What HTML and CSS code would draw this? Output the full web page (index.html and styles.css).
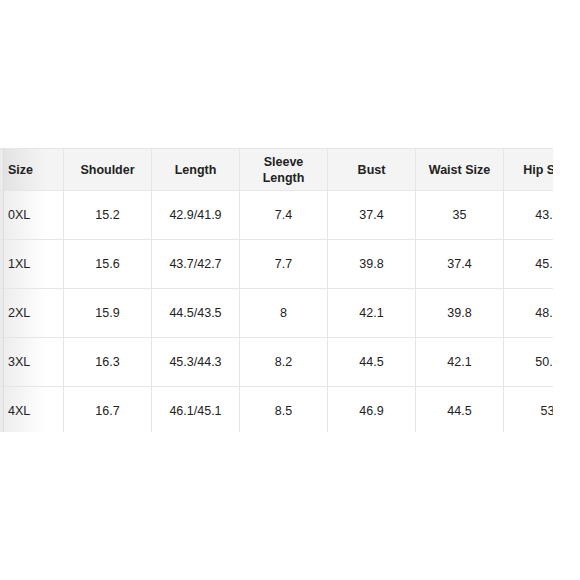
FILE: index.html
```html
<!DOCTYPE html>
<html>
<head>
<meta charset="utf-8">
<link rel="stylesheet" href="styles.css">
</head>
<body>
<div class="wrap">
<table class="sizes">
<thead>
<tr>
<th class="edge"></th><th class="size">Size</th><th>Shoulder</th><th>Length</th><th>Sleeve<br>Length</th><th>Bust</th><th>Waist Size</th><th>Hip Size</th>
</tr>
</thead>
<tbody>
<tr><td class="edge"></td><td class="size">0XL</td><td>15.2</td><td>42.9/41.9</td><td>7.4</td><td>37.4</td><td>35</td><td>43.3</td></tr>
<tr><td class="edge"></td><td class="size">1XL</td><td>15.6</td><td>43.7/42.7</td><td>7.7</td><td>39.8</td><td>37.4</td><td>45.9</td></tr>
<tr><td class="edge"></td><td class="size">2XL</td><td>15.9</td><td>44.5/43.5</td><td>8</td><td>42.1</td><td>39.8</td><td>48.3</td></tr>
<tr><td class="edge"></td><td class="size">3XL</td><td>16.3</td><td>45.3/44.3</td><td>8.2</td><td>44.5</td><td>42.1</td><td>50.6</td></tr>
<tr><td class="edge"></td><td class="size">4XL</td><td>16.7</td><td>46.1/45.1</td><td>8.5</td><td>46.9</td><td>44.5</td><td>53</td></tr>
</tbody>
</table>
</div>
</body>
</html>
```
FILE: styles.css
```css
html, body {
  margin: 0;
  padding: 0;
  background: #fff;
}
body {
  padding-top: 148px;
  font-family: "Liberation Sans", Arial, sans-serif;
  color: #222;
}
.wrap {
  width: 553px;
  height: 284px;
  overflow: hidden;
}
.sizes {
  border-collapse: separate;
  border-spacing: 0;
  table-layout: fixed;
  width: 592px;
  font-size: 12.5px;
}
.sizes th, .sizes td {
  box-sizing: border-box;
  width: 88px;
  padding: 0 4px;
  text-align: center;
  border-right: 1px solid #e6e6e6;
  border-bottom: 1px solid #e6e6e6;
}
.sizes th {
  height: 43px;
  border-top: 1px solid #e6e6e6;
  background: #f4f4f4;
  font-weight: bold;
  line-height: 16px;
}
.sizes td {
  height: 49px;
}
.sizes .edge {
  width: 4px;
  padding: 0;
  background: #ebebeb;
  border-right: 1px solid #dcdcdc;
}
.sizes .size {
  width: 60px;
  text-align: left;
  background-image: linear-gradient(to right, rgba(0,0,0,0.07), rgba(0,0,0,0) 70%);
}
```
